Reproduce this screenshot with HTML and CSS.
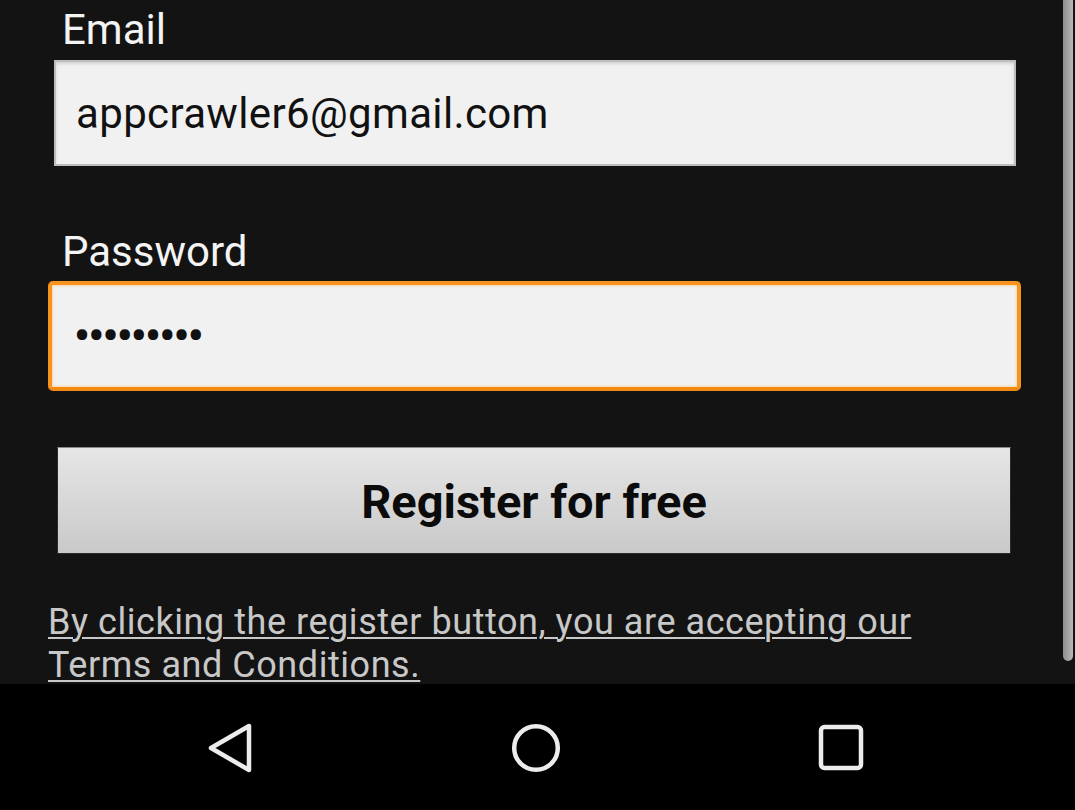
FILE: index.html
```html
<!DOCTYPE html>
<html>
<head>
<meta charset="utf-8">
<link rel="stylesheet" href="styles.css">
</head>
<body>
<div class="screen">
  <main class="content">
    <div class="label">Email</div>
    <div class="field field-email"><span class="value">appcrawler6@gmail.com</span></div>
    <div class="label label-pass">Password</div>
    <div class="field field-pass"><span class="dots">•••••••••</span></div>
    <div class="btn">Register for free</div>
    <p class="terms">By clicking the register button, you are accepting our<br>Terms and Conditions.</p>
    <div class="scrollbar"></div>
  </main>
  <nav class="navbar">
    <div class="nav-slot">
      <svg width="60" height="60" viewBox="0 0 60 60"><path d="M10 30 L48 8 L48 52 Z" fill="none" stroke="#ececec" stroke-width="4.5" stroke-linejoin="round"/></svg>
    </div>
    <div class="nav-slot">
      <svg width="60" height="60" viewBox="0 0 60 60"><circle cx="30" cy="30" r="21.8" fill="none" stroke="#ececec" stroke-width="4.5"/></svg>
    </div>
    <div class="nav-slot">
      <svg width="60" height="60" viewBox="0 0 60 60"><rect x="10" y="9" width="40" height="41" rx="3.5" fill="none" stroke="#ececec" stroke-width="4.5"/></svg>
    </div>
  </nav>
</div>
</body>
</html>
```

FILE: styles.css
```css
html, body {
  margin: 0;
  padding: 0;
  background: #000;
}
.screen {
  width: 1075px;
  height: 810px;
  display: flex;
  flex-direction: column;
  font-family: Roboto, "Liberation Sans", sans-serif;
}
.content {
  position: relative;
  height: 684px;
  flex-shrink: 0;
  overflow: hidden;
  background: #131313;
  box-sizing: border-box;
  padding: 6px 54px 0 48px;
  display: flex;
  flex-direction: column;
  align-items: stretch;
}
.content > * {
  flex-shrink: 0;
}
.label {
  color: #f4f4f4;
  font-size: 42px;
  line-height: 48px;
  padding-left: 14px;
}
.label-pass {
  margin-top: 62px;
}
.field {
  box-sizing: border-box;
  height: 106px;
  background: #f1f1f1;
  color: #111;
  font-size: 42px;
  line-height: 48px;
}
.field-email {
  margin: 6px 5px 0 6px;
  border: 2px solid #bdbdbd;
  box-shadow: inset 0 2px 3px rgba(0,0,0,0.12);
  padding: 28px 0 0 20px;
  letter-spacing: 0.35px;
}
.field-pass {
  margin-top: 5px;
  height: 110px;
  border: 4px solid #f7931e;
  border-bottom-color: #f28a12;
  border-radius: 5px;
  padding: 27px 0 0 22px;
  box-shadow: inset 0 0 2px 1px rgba(255,200,120,0.6);
}
.dots {
  font-size: 44px;
  letter-spacing: -1.6px;
  font-weight: 700;
}
.btn {
  box-sizing: border-box;
  height: 107px;
  margin: 56px 10px 0 9px;
  border: 1px solid #2a2a2a;
  border-top-color: #8a8a8a;
  background: linear-gradient(#e6e6e6, #c9c9c9);
  color: #0b0b0b;
  font-size: 47px;
  font-weight: 700;
  display: flex;
  align-items: center;
  justify-content: center;
  padding-top: 2px;
}
.terms {
  margin: 47px 0 0 0;
  color: #c8c8c8;
  font-size: 36px;
  letter-spacing: 0.55px;
  line-height: 43px;
  text-decoration: underline;
  text-decoration-thickness: 2px;
  text-underline-offset: 3px;
}
.scrollbar {
  position: absolute;
  right: 2px;
  top: 0;
  width: 10px;
  height: 661px;
  background: linear-gradient(90deg, #8e8e8e, #b8b8b8);
  border-radius: 0 0 5px 5px;
}
.navbar {
  height: 126px;
  flex-shrink: 0;
  background: #000;
  display: flex;
  align-items: center;
  padding-left: 201px;
  gap: 245px;
}
.nav-slot {
  width: 60px;
  height: 60px;
  display: flex;
  margin-top: 1px;
}
```
